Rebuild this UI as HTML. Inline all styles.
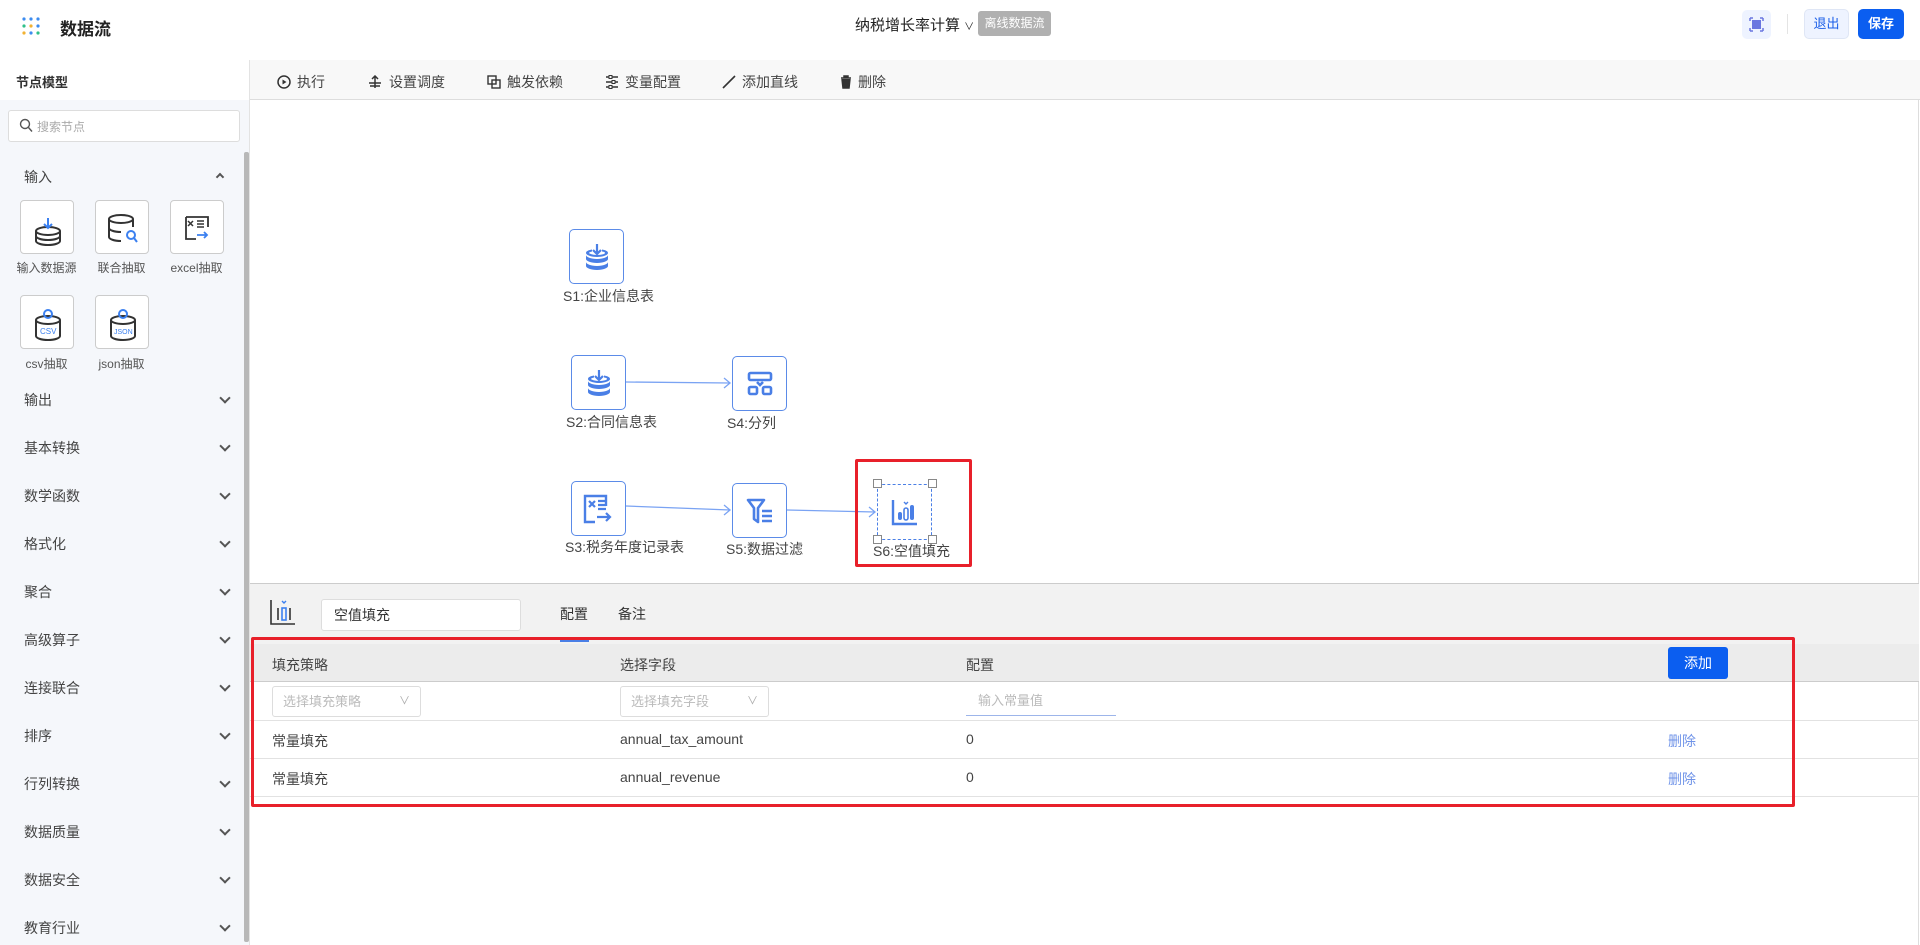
<!DOCTYPE html>
<html><head><meta charset="utf-8"><style>
*{box-sizing:border-box;margin:0;padding:0}
body{width:1920px;height:945px;overflow:hidden;background:#fff;font-family:"Liberation Sans","Noto Sans CJK SC",sans-serif;font-size:14px;color:#333;position:relative}
.a{position:absolute}
.cat{position:absolute;left:24px;font-size:14px;color:#444;width:205px}
.cat:after{content:"";position:absolute;right:0;top:4px;width:6px;height:6px;border-right:2px solid #555;border-bottom:2px solid #555;transform:rotate(45deg)}
.cat.up:after{display:none}
.nico{position:absolute;width:54px;height:54px;border:1px solid #ccc;border-radius:4px;background:#fff}
.nlab{position:absolute;font-size:12px;color:#555;text-align:center;width:75px}
.node{position:absolute;width:55px;height:55px;border:1.5px solid #5b8be8;border-radius:5px;background:#fff;display:flex;align-items:center;justify-content:center}
.lab{position:absolute;font-size:14px;color:#444;white-space:nowrap}
.tb{position:absolute;top:72px;font-size:14px;color:#444;display:flex;align-items:center;gap:6px}
.td{position:absolute;font-size:14px;color:#444}
</style></head><body>
<!-- header -->
<div class="a" style="left:0;top:0;width:1920px;height:60px;background:#fff;box-shadow:0 2px 6px rgba(0,0,0,.08)"></div>
<svg class="a" style="left:22px;top:17px" width="18" height="18"><g>
<circle cx="2" cy="2" r="1.6" fill="#3c8cf0"/><circle cx="9" cy="2" r="1.6" fill="#3c8cf0"/><circle cx="16" cy="2" r="1.6" fill="#3c8cf0"/>
<circle cx="2" cy="9" r="1.6" fill="#30c08a"/><circle cx="9" cy="9" r="1.6" fill="#f2b233"/><circle cx="16" cy="9" r="1.6" fill="#3c8cf0"/>
<circle cx="2" cy="16" r="1.6" fill="#f2b233"/><circle cx="9" cy="16" r="1.6" fill="#3c8cf0"/><circle cx="16" cy="16" r="1.6" fill="#30c08a"/></g></svg>
<div class="a" style="left:60px;top:15px;font-size:17px;font-weight:bold;color:#222">数据流</div>
<div class="a" style="left:855px;top:14px;font-size:15px;color:#222">纳税增长率计算 <span style="font-size:10px">∨</span></div>
<div class="a" style="left:978px;top:11px;width:73px;height:25px;background:#b0b0b0;border-radius:3px;color:#fff;font-size:12px;line-height:25px;text-align:center">离线数据流</div>
<div class="a" style="left:1742px;top:10px;width:29px;height:29px;background:#eef3ff;border-radius:5px"></div>
<svg class="a" style="left:1749px;top:17px" width="15" height="15"><rect x="3" y="3" width="9" height="9" fill="#6a76e0"/><path d="M1 1h3M1 1v3M14 1h-3M14 1v3M1 14h3M1 14v-3M14 14h-3M14 14v-3" stroke="#6a76e0" stroke-width="1.5"/></svg>
<div class="a" style="left:1787px;top:14px;width:1px;height:20px;background:#e4e4e4"></div>
<div class="a" style="left:1804px;top:9px;width:45px;height:30px;background:#eef3ff;border:1px solid #dfe6f5;border-radius:5px;color:#1a5ee8;font-size:13px;line-height:28px;text-align:center">退出</div>
<div class="a" style="left:1858px;top:9px;width:46px;height:30px;background:#0b5ef0;border-radius:5px;color:#fff;font-size:13px;font-weight:bold;line-height:30px;text-align:center">保存</div>
<!-- sidebar -->
<div class="a" style="left:0;top:60px;width:250px;height:885px;background:#f5f7fb;border-right:1px solid #e3e3e3"></div>
<div class="a" style="left:0;top:60px;width:249px;height:40px;background:#fff"></div>
<div class="a" style="left:16px;top:72px;font-size:13px;font-weight:bold;color:#333">节点模型</div>
<div class="a" style="left:8px;top:110px;width:232px;height:32px;background:#fff;border:1px solid #ddd;border-radius:3px"></div>
<svg class="a" style="left:19px;top:118px" width="14" height="16"><circle cx="6" cy="6" r="4.5" stroke="#555" stroke-width="1.4" fill="none"/><path d="M9.5 9.5l3.5 4" stroke="#555" stroke-width="1.4"/></svg>
<div class="a" style="left:37px;top:118px;font-size:12px;color:#aaa">搜索节点</div>
<div class="a" style="left:244px;top:152px;width:5px;height:790px;background:#b8b8b8;border-radius:2px"></div>
<div class="cat up" style="top:167px">输入</div>
<div class="a" style="left:217px;top:174px;width:6px;height:6px;border-left:2px solid #555;border-top:2px solid #555;transform:rotate(45deg)"></div>
<div class="nico" style="left:20px;top:200px"><svg width="54" height="54"><g stroke="#333" stroke-width="2" fill="none"><ellipse cx="27" cy="30" rx="12" ry="4"/><path d="M15 30v10c0 2 5 4 12 4s12-2 12-4V30M15 35c0 2 5 4 12 4s12-2 12-4"/></g><path d="M27 17v10M23 23l4 4 4-4" stroke="#3b80f0" stroke-width="2" fill="none"/></svg></div>
<div class="nico" style="left:95px;top:200px"><svg width="54" height="54"><g stroke="#333" stroke-width="2" fill="none"><ellipse cx="25" cy="18" rx="12" ry="4"/><path d="M13 18v18c0 2 5 4 12 4M13 27c0 2 5 4 12 4M37 18v8"/></g><circle cx="35" cy="34" r="4" stroke="#3b80f0" stroke-width="2" fill="none"/><path d="M38 37l3 4" stroke="#3b80f0" stroke-width="2"/></svg></div>
<div class="nico" style="left:170px;top:200px"><svg width="54" height="54"><path d="M15 16h22v10M15 16v22h10" stroke="#333" stroke-width="1.8" fill="none"/><path d="M17 20l5 5M22 20l-5 5M26 20h7M26 23h7M26 26h7" stroke="#333" stroke-width="1.5"/><path d="M26 34h10M33 31l3 3-3 3" stroke="#3b80f0" stroke-width="1.8" fill="none"/></svg></div>
<div class="nlab" style="left:9px;top:259px">输入数据源</div>
<div class="nlab" style="left:84px;top:259px">联合抽取</div>
<div class="nlab" style="left:159px;top:259px">excel抽取</div>
<div class="nico" style="left:20px;top:295px"><svg width="54" height="54"><path d="M15 24v16c0 2 5 4 12 4s12-2 12-4V24" stroke="#333" stroke-width="2" fill="none"/><ellipse cx="27" cy="24" rx="12" ry="4" stroke="#333" stroke-width="2" fill="none"/><circle cx="27" cy="18" r="4" stroke="#3b80f0" stroke-width="2" fill="none"/><text x="19" y="38" font-size="8" fill="#3b80f0" font-family="Liberation Sans">CSV</text></svg></div>
<div class="nico" style="left:95px;top:295px"><svg width="54" height="54"><path d="M15 24v16c0 2 5 4 12 4s12-2 12-4V24" stroke="#333" stroke-width="2" fill="none"/><ellipse cx="27" cy="24" rx="12" ry="4" stroke="#333" stroke-width="2" fill="none"/><circle cx="27" cy="18" r="4" stroke="#3b80f0" stroke-width="2" fill="none"/><text x="18" y="38" font-size="7" fill="#3b80f0" font-family="Liberation Sans">JSON</text></svg></div>
<div class="nlab" style="left:9px;top:355px">csv抽取</div>
<div class="nlab" style="left:84px;top:355px">json抽取</div>
<div class="cat" style="top:390px">输出</div>
<div class="cat" style="top:438px">基本转换</div>
<div class="cat" style="top:486px">数学函数</div>
<div class="cat" style="top:534px">格式化</div>
<div class="cat" style="top:582px">聚合</div>
<div class="cat" style="top:630px">高级算子</div>
<div class="cat" style="top:678px">连接联合</div>
<div class="cat" style="top:726px">排序</div>
<div class="cat" style="top:774px">行列转换</div>
<div class="cat" style="top:822px">数据质量</div>
<div class="cat" style="top:870px">数据安全</div>
<div class="cat" style="top:918px">教育行业</div>
<!-- toolbar -->
<div class="a" style="left:250px;top:60px;width:1670px;height:40px;background:#f8f8f8;border-bottom:1px solid #ddd"></div>
<div class="tb" style="left:277px"><svg width="14" height="14"><circle cx="7" cy="7" r="6" stroke="#333" stroke-width="1.5" fill="none"/><path d="M5.5 4.5v5l4-2.5z" fill="#333"/></svg>执行</div>
<div class="tb" style="left:367px"><svg width="16" height="14"><path d="M8 1v12M5 4l3-3 3 3M2 8h12M3 11h10" stroke="#333" stroke-width="1.5" fill="none"/></svg>设置调度</div>
<div class="tb" style="left:487px"><svg width="14" height="14"><rect x="1" y="1" width="8" height="8" stroke="#333" stroke-width="1.4" fill="none"/><rect x="5" y="5" width="8" height="8" stroke="#333" stroke-width="1.4" fill="none"/></svg>触发依赖</div>
<div class="tb" style="left:605px"><svg width="14" height="14"><path d="M1 2h3M7 2h6M1 7h6M10 7h3M1 12h3M7 12h6" stroke="#333" stroke-width="1.5"/><rect x="4" y="0.5" width="3" height="3" fill="none" stroke="#333"/><rect x="7" y="5.5" width="3" height="3" fill="none" stroke="#333"/><rect x="4" y="10.5" width="3" height="3" fill="none" stroke="#333"/></svg>变量配置</div>
<div class="tb" style="left:722px"><svg width="14" height="14"><path d="M1 13L13 1" stroke="#333" stroke-width="1.6"/></svg>添加直线</div>
<div class="tb" style="left:840px"><svg width="12" height="14"><path d="M1 3h10M4 3V1h4v2M2 4l1 9h6l1-9" stroke="#333" stroke-width="1.5" fill="#333"/></svg>删除</div>
<div class="a" style="left:1918px;top:100px;width:1px;height:845px;background:#ddd"></div>
<!-- canvas -->
<svg class="a" style="left:0;top:0" width="1920" height="600">
<g stroke="#7aa3f3" stroke-width="1.3" fill="none">
<path d="M626 382L730 383"/><path d="M724 378l6 5-6 5"/>
<path d="M626 506L730 510"/><path d="M724 505l6 5-6 5"/>
<path d="M787 510L875 512"/><path d="M869 507l6 5-6 5"/>
</g></svg>
<div class="node" style="left:569px;top:229px"><svg width="30" height="30"><g fill="#4a7fe6"><path d="M4 13c0 2 5 4 11 4s11-2 11-4v4c0 2-5 4-11 4S4 19 4 17z"/><path d="M4 20c0 2 5 4 11 4s11-2 11-4v4c0 2-5 4-11 4S4 26 4 24z"/><path d="M4 11c0-2 3-3 6-3.5v2c-2 .5-3 1-3 1.5s4 2 8 2 8-1 8-2-1-1-3-1.5v-2c3 .5 6 1.5 6 3.5 0 2-5 4-11 4S4 13 4 11z"/></g><path d="M15 2v10M11 8l4 4 4-4" stroke="#4a7fe6" stroke-width="2.2" fill="none"/></svg></div>
<div class="lab" style="left:563px;top:286px">S1:企业信息表</div>
<div class="node" style="left:571px;top:355px"><svg width="30" height="30"><g fill="#4a7fe6"><path d="M4 13c0 2 5 4 11 4s11-2 11-4v4c0 2-5 4-11 4S4 19 4 17z"/><path d="M4 20c0 2 5 4 11 4s11-2 11-4v4c0 2-5 4-11 4S4 26 4 24z"/><path d="M4 11c0-2 3-3 6-3.5v2c-2 .5-3 1-3 1.5s4 2 8 2 8-1 8-2-1-1-3-1.5v-2c3 .5 6 1.5 6 3.5 0 2-5 4-11 4S4 13 4 11z"/></g><path d="M15 2v10M11 8l4 4 4-4" stroke="#4a7fe6" stroke-width="2.2" fill="none"/></svg></div>
<div class="lab" style="left:566px;top:412px">S2:合同信息表</div>
<div class="node" style="left:732px;top:356px"><svg width="30" height="30"><g stroke="#4a7fe6" stroke-width="2.6" fill="none"><rect x="4" y="4" width="22" height="7" rx="1.5"/><rect x="4" y="18" width="8" height="7" rx="1.5"/><rect x="18" y="18" width="8" height="7" rx="1.5"/><path d="M12 13l3 3 3-3"/></g></svg></div>
<div class="lab" style="left:727px;top:413px">S4:分列</div>
<div class="node" style="left:571px;top:481px"><svg width="34" height="34"><path d="M24 14V4H3v26h10" stroke="#4a7fe6" stroke-width="2.4" fill="none"/><path d="M7 9l6 6M13 9l-6 6M16 9h8M16 13h8M16 17h8" stroke="#4a7fe6" stroke-width="2.2"/><path d="M15 25h13M24 21l4 4-4 4" stroke="#4a7fe6" stroke-width="2.2" fill="none"/></svg></div>
<div class="lab" style="left:565px;top:537px">S3:税务年度记录表</div>
<div class="node" style="left:732px;top:483px"><svg width="32" height="32"><path d="M4 5h16l-6 8v14l-4-3V13z" stroke="#4a7fe6" stroke-width="2.6" fill="none" stroke-linejoin="round"/><path d="M18 16h10M18 21h10M18 26h10" stroke="#4a7fe6" stroke-width="2.6"/></svg></div>
<div class="lab" style="left:726px;top:539px">S5:数据过滤</div>
<div class="a" style="left:877px;top:484px;width:55px;height:56px;border:1px dashed #4a7fe6;background:#fff;display:flex;align-items:center;justify-content:center"><svg width="30" height="30"><path d="M3 3v24h24" stroke="#4a7fe6" stroke-width="2.4" fill="none"/><rect x="8" y="15" width="4" height="8" rx="2" fill="#4a7fe6"/><rect x="14" y="11" width="4" height="12" rx="2" stroke="#4a7fe6" stroke-width="1.6" fill="none"/><rect x="20" y="8" width="4" height="15" rx="2" fill="#4a7fe6"/><path d="M14 5l2 2 2-2" stroke="#4a7fe6" stroke-width="1.4" fill="none"/></svg></div>
<div class="a" style="left:873px;top:479px;width:9px;height:9px;border:1px solid #888;background:#fff"></div>
<div class="a" style="left:928px;top:479px;width:9px;height:9px;border:1px solid #888;background:#fff"></div>
<div class="a" style="left:873px;top:535px;width:9px;height:9px;border:1px solid #888;background:#fff"></div>
<div class="a" style="left:928px;top:535px;width:9px;height:9px;border:1px solid #888;background:#fff"></div>
<div class="lab" style="left:873px;top:541px">S6:空值填充</div>
<div class="a" style="left:855px;top:459px;width:117px;height:108px;border:3px solid #e8202a;border-radius:2px"></div>
<!-- bottom panel -->
<div class="a" style="left:250px;top:583px;width:1669px;height:61px;background:#f2f2f2;border-top:1px solid #ccc"></div>
<svg class="a" style="left:269px;top:598px" width="28" height="28"><path d="M2 2v24h24" stroke="#333" stroke-width="1.6" fill="none"/><path d="M9 10v12M21 10v12" stroke="#333" stroke-width="1.6"/><rect x="13" y="10" width="4" height="12" stroke="#3b80f0" stroke-width="1.6" fill="none"/><path d="M13 3l2 2 2-2" stroke="#3b80f0" stroke-width="1.4" fill="none"/></svg>
<div class="a" style="left:321px;top:599px;width:200px;height:32px;background:#fff;border:1px solid #ddd;border-radius:3px;padding-left:12px;line-height:30px;font-size:14px;color:#333">空值填充</div>
<div class="a" style="left:560px;top:604px;font-size:14px;color:#333">配置</div>
<div class="a" style="left:618px;top:604px;font-size:14px;color:#333">备注</div>
<div class="a" style="left:560px;top:639px;width:29px;height:3px;background:#4a7fe6"></div>
<div class="a" style="left:250px;top:644px;width:1669px;height:38px;background:#ececec;border-bottom:1px solid #ccc"></div>
<div class="td" style="left:272px;top:655px">填充策略</div>
<div class="td" style="left:620px;top:655px">选择字段</div>
<div class="td" style="left:966px;top:655px">配置</div>
<div class="a" style="left:1668px;top:647px;width:60px;height:32px;background:#0b5ef0;border-radius:3px;color:#fff;font-size:14px;text-align:center;line-height:32px">添加</div>
<div class="a" style="left:272px;top:686px;width:149px;height:31px;border:1px solid #ddd;border-radius:3px;background:#fff;font-size:13px;color:#bbb;padding-left:10px;line-height:29px">选择填充策略<span style="position:absolute;right:10px;font-size:11px;color:#aaa">∨</span></div>
<div class="a" style="left:620px;top:686px;width:149px;height:31px;border:1px solid #ddd;border-radius:3px;background:#fff;font-size:13px;color:#bbb;padding-left:10px;line-height:29px">选择填充字段<span style="position:absolute;right:10px;font-size:11px;color:#aaa">∨</span></div>
<div class="a" style="left:966px;top:690px;width:150px;height:26px;border-bottom:1px solid #9db5ea;font-size:13px;color:#bbb;padding-left:12px">输入常量值</div>
<div class="a" style="left:250px;top:720px;width:1669px;height:1px;background:#e2e2e2"></div>
<div class="td" style="left:272px;top:731px">常量填充</div>
<div class="td" style="left:620px;top:731px">annual_tax_amount</div>
<div class="td" style="left:966px;top:731px">0</div>
<div class="td" style="left:1668px;top:731px;color:#6f93e8">删除</div>
<div class="a" style="left:250px;top:758px;width:1669px;height:1px;background:#e2e2e2"></div>
<div class="td" style="left:272px;top:769px">常量填充</div>
<div class="td" style="left:620px;top:769px">annual_revenue</div>
<div class="td" style="left:966px;top:769px">0</div>
<div class="td" style="left:1668px;top:769px;color:#6f93e8">删除</div>
<div class="a" style="left:250px;top:796px;width:1669px;height:1px;background:#e2e2e2"></div>
<div class="a" style="left:251px;top:637px;width:1544px;height:170px;border:3px solid #e8202a;border-radius:2px"></div>
</body></html>
